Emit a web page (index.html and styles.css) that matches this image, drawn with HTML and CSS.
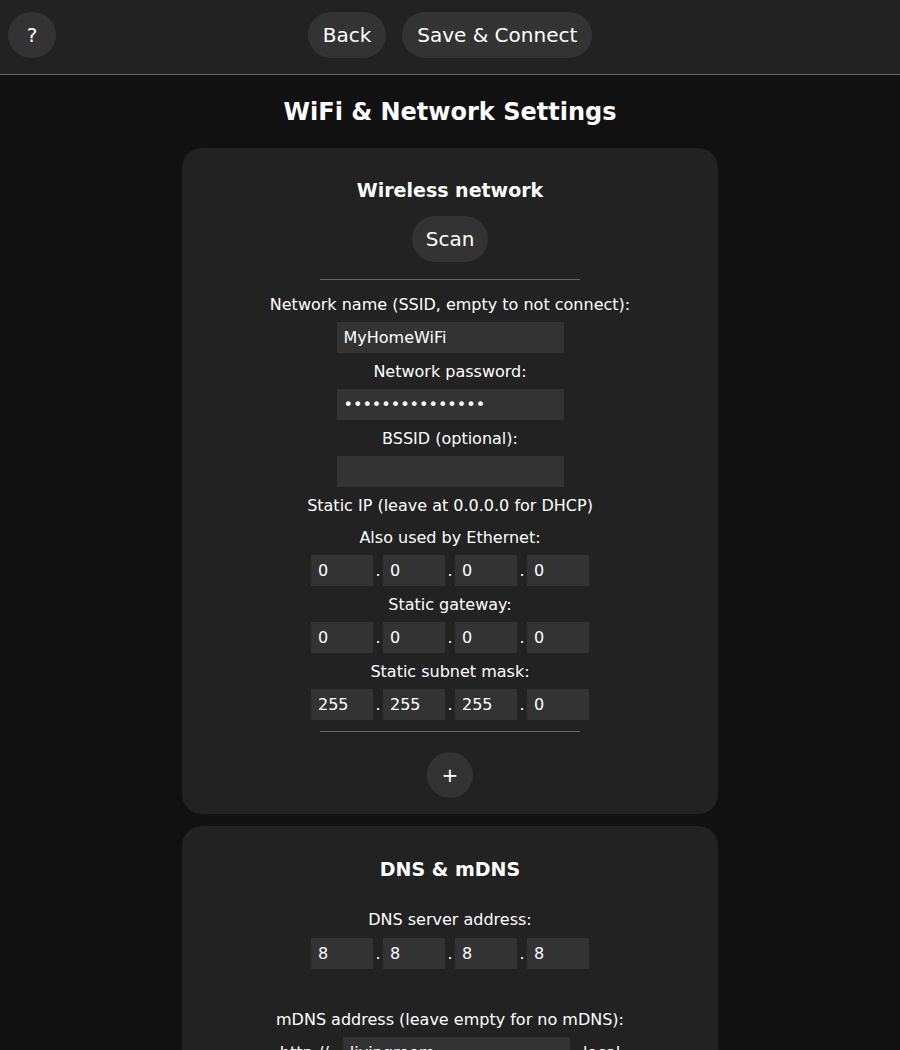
FILE: index.html
```html
<!DOCTYPE html>
<html>
<head>
<meta charset="utf-8">
<link rel="stylesheet" href="styles.css">
</head>
<body>
<div class="topbar">
  <div class="left"><button class="btn help">?</button></div>
  <div class="center">
    <button class="btn">Back</button>
    <button class="btn">Save &amp; Connect</button>
  </div>
  <div class="right"></div>
</div>

<h1 class="title">WiFi &amp; Network Settings</h1>

<section class="card">
  <h2 class="card-title">Wireless network</h2>
  <button class="btn scan">Scan</button>
  <hr class="sep sep-top">
  <div class="lbl first">Network name (SSID, empty to not connect):</div>
  <input class="txt" type="text" value="MyHomeWiFi">
  <div class="lbl">Network password:</div>
  <input class="txt" type="password" value="passwordpasswor">
  <div class="lbl">BSSID (optional):</div>
  <input class="txt" type="text" value="">
  <div class="lbl">Static IP (leave at 0.0.0.0 for DHCP)</div>
  <div class="lbl second">Also used by Ethernet:</div>
  <div class="ip">
    <input class="oct" type="text" value="0"><span class="dot">.</span><input class="oct" type="text" value="0"><span class="dot">.</span><input class="oct" type="text" value="0"><span class="dot">.</span><input class="oct" type="text" value="0">
  </div>
  <div class="lbl">Static gateway:</div>
  <div class="ip">
    <input class="oct" type="text" value="0"><span class="dot">.</span><input class="oct" type="text" value="0"><span class="dot">.</span><input class="oct" type="text" value="0"><span class="dot">.</span><input class="oct" type="text" value="0">
  </div>
  <div class="lbl">Static subnet mask:</div>
  <div class="ip">
    <input class="oct" type="text" value="255"><span class="dot">.</span><input class="oct" type="text" value="255"><span class="dot">.</span><input class="oct" type="text" value="255"><span class="dot">.</span><input class="oct" type="text" value="0">
  </div>
  <hr class="sep sep-bottom">
  <button class="btn plus">+</button>
</section>

<section class="card card2">
  <h2 class="card-title">DNS &amp; mDNS</h2>
  <div class="lbl dns">DNS server address:</div>
  <div class="ip">
    <input class="oct" type="text" value="8"><span class="dot">.</span><input class="oct" type="text" value="8"><span class="dot">.</span><input class="oct" type="text" value="8"><span class="dot">.</span><input class="oct" type="text" value="8">
  </div>
  <div class="lbl mdns">mDNS address (leave empty for no mDNS):</div>
  <div class="mrow">
    <span class="prefix">http://</span><input class="txt inl" type="text" value="livingroom"><span class="suffix">.local</span>
  </div>
</section>
</body>
</html>
```

FILE: styles.css
```css
html, body {
  margin: 0;
  padding: 0;
}
body {
  background: #111;
  color: #fff;
  font-family: "DejaVu Sans", Verdana, sans-serif;
  font-size: 16px;
}
.topbar {
  height: 74px;
  background: #222;
  border-bottom: 1px solid #666;
  display: grid;
  grid-template-columns: 1fr auto 1fr;
  align-items: start;
}
.topbar .left {
  justify-self: start;
  padding-left: 8px;
}
.topbar .center {
  display: flex;
  gap: 16px;
}
.btn {
  background: #333;
  color: #fff;
  border: 0;
  font-family: "DejaVu Sans", Verdana, sans-serif;
  font-size: 20px;
  height: 46px;
  min-width: 48px;
  padding: 0 15px;
  border-radius: 23px;
  margin-top: 12px;
  line-height: 46px;
  cursor: pointer;
}
.help {
  width: 48px;
  padding: 0;
}
.title {
  margin: 22px 0 21px;
  font-size: 24px;
  line-height: 30px;
  text-align: center;
  font-weight: bold;
}
.card {
  width: 536px;
  margin: 0 auto;
  background: #222;
  border-radius: 20px;
  padding: 30px 0 16px;
  box-sizing: border-box;
  display: flex;
  flex-direction: column;
  align-items: center;
}
.card2 {
  margin-top: 12px;
}
.card-title {
  margin: 0;
  font-size: 19px;
  line-height: 24px;
  font-weight: bold;
}
.card2 .card-title {
  margin-top: 1px;
}
.scan {
  margin-top: 14px;
  padding: 0 14px;
}
.sep {
  width: 260px;
  border: 0;
  border-top: 1px solid #666;
  margin: 0;
}
.sep-top {
  margin-top: 17px;
}
.sep-bottom {
  margin-top: 11px;
}
.lbl {
  line-height: 20px;
  margin: 9px 0 7px;
  text-align: center;
}
.lbl.first {
  margin-top: 15px;
  margin-bottom: 7px;
}
.lbl.second {
  margin-top: 5px;
}
.lbl.dns {
  margin-top: 29px;
  margin-bottom: 8px;
}
.lbl.mdns {
  margin-top: 41px;
}
input {
  background: #333;
  color: #fff;
  border: 0;
  outline: none;
  font-family: "DejaVu Sans", Verdana, sans-serif;
  font-size: 16px;
  height: 31px;
  padding: 0 7px;
  box-sizing: border-box;
  margin: 0;
}
.txt {
  width: 227px;
  display: block;
}
.ip {
  display: flex;
  align-items: baseline;
}
.oct {
  width: 62px;
}
.dot {
  width: 10px;
  text-align: center;
}
.plus {
  margin-top: 20px;
  width: 46px;
  min-width: 46px;
  padding: 0;
}
.mrow {
  display: flex;
  align-items: baseline;
}
.prefix {
  margin-right: 14px;
}
.suffix {
  margin-left: 8px;
}
.txt.inl {
  display: inline-block;
}
```
